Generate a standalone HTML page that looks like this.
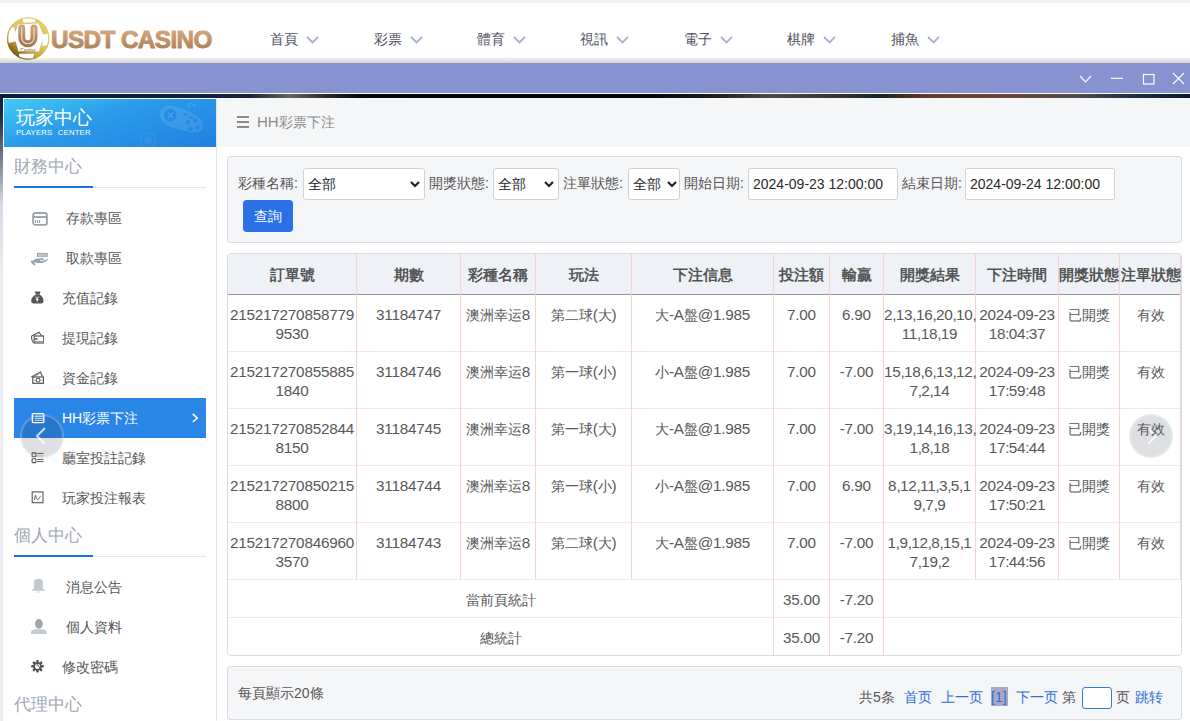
<!DOCTYPE html>
<html><head><meta charset="utf-8">
<style>
*{box-sizing:border-box;margin:0;padding:0}
html,body{width:1190px;height:721px;overflow:hidden;background:#fff;font-family:"Liberation Sans",sans-serif;color:#555}
.abs{position:absolute}
#topstrip{left:0;top:0;width:1190px;height:3px;background:#f3f3f3}
#hdr{left:0;top:3px;width:1190px;height:60px;background:linear-gradient(#fff 0,#fff 53px,#d0d0cc 60px)}
#logotext{left:51px;top:24px;font-size:24px;font-weight:bold;letter-spacing:-0.4px;line-height:30px;background:linear-gradient(#dcb088,#9e7548);-webkit-background-clip:text;color:transparent;white-space:nowrap}
.nav{top:30px;font-size:14px;line-height:18px;color:#4f4f5f;white-space:nowrap}
.nav svg{position:absolute;top:6px}
#purple{left:0;top:63px;width:1190px;height:30px;background:#8792d0}
#wline{left:0;top:93px;width:1190px;height:1px;background:#fff}
#dark{left:0;top:94px;width:1190px;height:627px;background:linear-gradient(180deg,#0e2240 0,#132a48 20px,#6b7488 60px,#d5d9e2 110px,#eceef3 180px,#eceef3 100%)}
#darkstrip{left:0;top:94px;width:1190px;height:4px;background:linear-gradient(90deg,#0c1e3a 0,#10203a 200px,#1a2236 250px,#66665e 290px,#2a2a2a 325px,#05080f 360px,#03060f 650px,#202020 720px,#4a4a48 770px,#2e2e2e 850px,#0e2626 880px,#3a2a20 900px,#6a3a28 930px,#6a4636 1010px,#4a4a4c 1080px,#1c2a44 1140px,#0a1830 1190px)}
#side{left:3px;top:98px;width:214px;height:623px;background:#fff;border:1px solid #fff;border-right:1px solid #e1e5ea}
#sidehead{left:4px;top:99px;width:212px;height:48px;background:linear-gradient(162deg,#43c9f5 0%,#36b3f0 22%,#2b9cea 40%,#2690e7 65%,#1f80e0 100%);overflow:hidden}
#main{left:217px;top:98px;width:973px;height:623px;background:#fff}
#crumb{left:217px;top:98px;width:973px;height:49px;background:#f5f6f8}
.panel{background:#f5f6f8;border:1px solid #d9dde3;border-radius:3px}
.lbl{font-size:14px;color:#555;line-height:18px;white-space:nowrap}
.sel{background:#fff;border:1px solid #cfd3d8;border-radius:3px;height:32px;font-size:14px;color:#212529;line-height:31px;padding-left:4px}
.sel svg{position:absolute;right:4px;top:12px}
.inp{background:#fff;border:1px solid #d0d3d8;border-radius:2px;height:32px;font-size:14px;color:#2a2a2a;line-height:31px;padding-left:4px;white-space:nowrap}
.sec{font-size:17px;color:#9ea7b3;line-height:20px}
.secl{height:1px;background:#e3e6ea}
.secb{height:2px;background:#1a73e3}
.mi{font-size:14px;color:#555;line-height:18px;white-space:nowrap;z-index:2}
.ico{z-index:2}
.th{top:265px;font-size:15px;font-weight:bold;line-height:20px;color:#555;text-align:center;white-space:nowrap;overflow:visible;z-index:2}
.td{font-size:15.3px;letter-spacing:-0.25px;line-height:19px;color:#585858;text-align:center;white-space:nowrap;z-index:2}
.td .cj{font-size:14.2px;line-height:1;letter-spacing:0}
.td .p{letter-spacing:-0.7px}
.th .cj{font-size:14.6px;line-height:1}
</style></head><body>
<div class="abs" id="topstrip"></div>
<div class="abs" id="hdr"></div>
<!-- logo ball -->
<svg class="abs" style="left:4px;top:14px" width="48" height="50" viewBox="0 0 48 50">
<defs><linearGradient id="gold" x1="0.85" y1="0.1" x2="0.2" y2="0.95"><stop offset="0" stop-color="#e4cc68"/><stop offset=".45" stop-color="#dcc468"/><stop offset=".7" stop-color="#c4a440"/><stop offset="1" stop-color="#6a500e"/></linearGradient>
<linearGradient id="ug" x1="0" y1="0" x2="0" y2="1"><stop offset="0" stop-color="#cea07a"/><stop offset="1" stop-color="#a4784e"/></linearGradient>
<linearGradient id="lg" x1="0" y1="0" x2="0" y2="1"><stop offset="0" stop-color="#dcae84"/><stop offset="1" stop-color="#a47850"/></linearGradient>
<clipPath id="cc"><circle cx="24.2" cy="24.5" r="21"/></clipPath></defs>
<circle cx="24.2" cy="24.5" r="21" fill="url(#gold)"/>
<g clip-path="url(#cc)" fill="#fff">
<path d="M14 10.5 L34.5 9.5 L39.5 21.5 L35 37.5 L14.5 37.5 L10 22Z"/>
<path d="M18 3 L32 3 L31 8.3 L19.5 8.8Z"/>
<path d="M2 14.5 L10.3 13 L12.8 27 L3 29.5Z"/>
<path d="M15 39.8 L30 39.8 L28.5 48 L16 48Z"/>
<path d="M38 20.5 L47 19 L47 31 L38.5 32Z"/>
<path d="M6 8 L13 5 L14 7 L8 10Z" opacity=".7"/>
</g>
<circle cx="24.2" cy="24.5" r="20.6" fill="none" stroke="url(#gold)" stroke-width="1.2"/>
<path d="M22.2 13.9 L22.2 23.65 A6.15 6.15 0 0 0 34.5 23.65 L34.5 13.9" fill="none" stroke="url(#ug)" stroke-width="7" stroke-linecap="round" transform="translate(-4.5 0)"/>
<path d="M22.2 13.9 L22.2 23.65 A6.15 6.15 0 0 0 34.5 23.65 L34.5 13.9" fill="none" stroke="#f7eee6" stroke-width="1.1" stroke-linecap="round" opacity=".85" transform="translate(-4.5 0)"/>
<text x="24" y="38.3" font-size="4.6" font-weight="bold" fill="#b48a66" text-anchor="middle" font-family="Liberation Sans">Casino</text>
</svg>
<svg class="abs" style="left:48px;top:24px" width="170" height="30" viewBox="0 0 170 30"><text x="3" y="24.3" font-size="24.3" font-weight="bold" letter-spacing="-0.6" fill="url(#lg)" stroke="url(#lg)" stroke-width="0.9" font-family="Liberation Sans">USDT CASINO</text></svg>
<!-- nav -->
<div class="abs nav" style="left:270px">首頁<svg style="left:36px" width="13" height="8" viewBox="0 0 13 8"><path d="M1 1 L6.5 6.5 L12 1" fill="none" stroke="#a9b3cf" stroke-width="1.8"/></svg></div>
<div class="abs nav" style="left:374px">彩票<svg style="left:36px" width="13" height="8" viewBox="0 0 13 8"><path d="M1 1 L6.5 6.5 L12 1" fill="none" stroke="#a9b3cf" stroke-width="1.8"/></svg></div>
<div class="abs nav" style="left:477px">體育<svg style="left:36px" width="13" height="8" viewBox="0 0 13 8"><path d="M1 1 L6.5 6.5 L12 1" fill="none" stroke="#a9b3cf" stroke-width="1.8"/></svg></div>
<div class="abs nav" style="left:580px">視訊<svg style="left:36px" width="13" height="8" viewBox="0 0 13 8"><path d="M1 1 L6.5 6.5 L12 1" fill="none" stroke="#a9b3cf" stroke-width="1.8"/></svg></div>
<div class="abs nav" style="left:684px">電子<svg style="left:36px" width="13" height="8" viewBox="0 0 13 8"><path d="M1 1 L6.5 6.5 L12 1" fill="none" stroke="#a9b3cf" stroke-width="1.8"/></svg></div>
<div class="abs nav" style="left:787px">棋牌<svg style="left:36px" width="13" height="8" viewBox="0 0 13 8"><path d="M1 1 L6.5 6.5 L12 1" fill="none" stroke="#a9b3cf" stroke-width="1.8"/></svg></div>
<div class="abs nav" style="left:891px">捕魚<svg style="left:36px" width="13" height="8" viewBox="0 0 13 8"><path d="M1 1 L6.5 6.5 L12 1" fill="none" stroke="#a9b3cf" stroke-width="1.8"/></svg></div>

<div class="abs" id="purple"></div>
<svg class="abs" style="left:1070px;top:62px" width="120" height="34" viewBox="0 0 120 34">
<g fill="none" stroke="#fff" stroke-width="1.2">
<path d="M10 14 L15.5 19.8 L21 14"/>
<path d="M40.8 16.3 L53 16.3"/>
<rect x="73.5" y="12.5" width="10.5" height="9.5"/>
<path d="M103 11 L114 22 M114 11 L103 22"/>
</g></svg>
<div class="abs" id="wline"></div>
<div class="abs" id="dark"></div>
<div class="abs" id="darkstrip"></div>

<!-- sidebar -->
<div class="abs" id="side"></div>
<div class="abs" id="sidehead">
 <svg class="abs" style="left:0;top:0" width="212" height="48" viewBox="0 0 212 48">
  <path d="M155.5 14.5 Q157 6 167 6.5 Q180 8 194 18 Q202 24 198 31 Q193 35.5 184 32.5 L171 29.5 Q157 26 155.5 14.5Z" fill="#fff" opacity=".1"/>
  <circle cx="166.4" cy="16.3" r="6.2" fill="#1c78dc" opacity=".55"/>
  <path d="M163.6 13.5 L169.2 19.1 M169.2 13.5 L163.6 19.1" stroke="#5ab4f0" stroke-width="1.6" opacity=".5"/>
  <g fill="#1c78dc" opacity=".5"><circle cx="184" cy="23" r="2.1"/><circle cx="191.5" cy="21.5" r="2.1"/><circle cx="186.5" cy="30" r="2.1"/><circle cx="193.5" cy="28.5" r="2.1"/></g>
  <path d="M180 14.3 L183.5 16.3 M185.3 17.5 L189 19.5" stroke="#1c78dc" stroke-width="1.6" opacity=".5"/>
  <path d="M185 9 Q183.5 4.5 186.5 4.5 Q189 5 190 7 Q191.5 8.5 191 5" fill="none" stroke="#7cc8f5" stroke-width="1" opacity=".35"/>
  <circle cx="144" cy="41.5" r="7.5" fill="none" stroke="#fff" stroke-width="2" stroke-dasharray="3 2" opacity=".07"/>
  <circle cx="144" cy="41.5" r="4" fill="#fff" opacity=".06"/>
 </svg>
 <div class="abs" style="left:12px;top:7px;font-size:19px;line-height:24px;color:#fff;white-space:nowrap">玩家中心</div>
 <div class="abs" style="left:12px;top:29px;font-size:7.8px;line-height:10px;color:#fff;letter-spacing:0.15px;word-spacing:3px;white-space:nowrap">PLAYERS CENTER</div>
</div>

<div class="abs sec" style="left:14px;top:157px">財務中心</div>
<div class="abs secl" style="left:14px;top:187px;width:192px"></div>
<div class="abs secb" style="left:14px;top:186px;width:79px"></div>

<!-- menu icons -->
<svg class="abs ico" style="left:32px;top:212px" width="16" height="14" viewBox="0 0 16 14"><rect x="1.1" y="1" width="13.8" height="11.8" rx="2" fill="none" stroke="#98a3ad" stroke-width="1.8"/><rect x="1" y="4.1" width="14" height="1.9" fill="#98a3ad"/><path d="M3.5 8v3M5.5 8v3M7.5 8v3" stroke="#98a3ad" stroke-width="1"/></svg>
<div class="abs mi" style="left:66px;top:209px">存款專區</div>
<svg class="abs ico" style="left:31px;top:252px" width="18" height="14" viewBox="0 0 18 14"><rect x="6" y="0.9" width="10.8" height="3.9" fill="#9ba5ae"/><rect x="7" y="1.9" width="8.8" height="1.9" fill="#c0c7cd"/><path d="M0.9 9.5 L3.3 12.4" stroke="#98a3ad" stroke-width="2" stroke-linecap="round"/><path d="M2.2 8 Q5 6.3 9 6.3 L12.6 6.3 Q13.3 7.7 12 7.9 L8.8 8 Q8.5 8.9 10.5 8.9 Q14 8.9 17.7 6.3 Q15.5 10.3 11 10.9 L6 10.9 Q3.5 10.6 2.2 9.9Z" fill="#98a3ad"/></svg>
<div class="abs mi" style="left:66px;top:249px">取款專區</div>
<svg class="abs ico" style="left:31px;top:291px" width="13" height="13" viewBox="0 0 13 13"><path d="M3.7 0.6 L9.5 0.6 L8.5 3.5 L5 3.5Z" fill="#555"/><path d="M5 3.5 Q0 6 0.2 10 Q0.2 12.5 2.5 12.5 L10 12.5 Q12.5 12.5 12.5 10 Q12.5 6 8.5 3.5Z" fill="#555"/><path d="M4.7 5.6 L6.2 7.6 L7.7 5.6 M6.2 7.6 V10.6 M4.9 8.4 H7.5" stroke="#fff" stroke-width="1" fill="none"/></svg>
<div class="abs mi" style="left:62px;top:289px">充值記錄</div>
<svg class="abs ico" style="left:31px;top:331px" width="13" height="13" viewBox="0 0 13 13"><path d="M0.3 5.3 L8.1 1.3 L10.6 5" fill="none" stroke="#555" stroke-width="1.1"/><path d="M0.3 5.3 Q0.5 9 2.5 12" fill="none" stroke="#555" stroke-width="1.1"/><rect x="3.2" y="5" width="9.5" height="7" fill="none" stroke="#555" stroke-width="1.2"/><rect x="4.2" y="7" width="2.2" height="2" fill="#666"/><rect x="3.5" y="10" width="9" height="1.6" fill="#999"/></svg>
<div class="abs mi" style="left:62px;top:329px">提現記錄</div>
<svg class="abs ico" style="left:31px;top:371px" width="13" height="13" viewBox="0 0 13 13"><path d="M0.3 6 L9.5 1 L11.5 5.5" fill="none" stroke="#555" stroke-width="1.1"/><path d="M3 5.5 L8.5 2.8" fill="none" stroke="#888" stroke-width="0.9"/><rect x="1.8" y="6" width="10.6" height="6.3" fill="none" stroke="#555" stroke-width="1.2"/><ellipse cx="7.1" cy="9.15" rx="1.9" ry="1.9" fill="none" stroke="#555" stroke-width="1.1"/><path d="M3.6 9.15h1M9.6 9.15h1" stroke="#555" stroke-width="1"/></svg>
<div class="abs mi" style="left:62px;top:369px">資金記錄</div>

<div class="abs" style="left:14px;top:398px;width:192px;height:40px;background:#2a86e6"></div>
<svg class="abs ico" style="left:31px;top:412px" width="14" height="12" viewBox="0 0 14 12"><rect x="1.3" y="1.6" width="11.5" height="9.1" rx="1.2" fill="none" stroke="#fff" stroke-width="1.3"/><path d="M4 4.3H12M4 6.3H12M4 8.3H12" stroke="#e6eef8" stroke-width="0.9"/><path d="M2.4 4.3H3.2M2.4 6.3H3.2M2.4 8.3H3.2" stroke="#cfe0f5" stroke-width="0.9"/></svg>
<div class="abs mi" style="left:62px;top:409px;color:#fff">HH彩票下注</div>
<svg class="abs ico" style="left:190px;top:412px" width="10" height="12" viewBox="0 0 10 12"><path d="M3.3 2.4 L7.3 6.2 L3.3 9.5" fill="none" stroke="#fff" stroke-width="1.6" stroke-linecap="round" stroke-linejoin="round"/></svg>

<svg class="abs ico" style="left:31px;top:452px" width="13" height="12" viewBox="0 0 13 12"><rect x="1.1" y="0.9" width="3.8" height="3.8" rx=".5" fill="none" stroke="#555" stroke-width="1.1"/><rect x="1.1" y="6.8" width="3.8" height="3.8" rx=".5" fill="none" stroke="#555" stroke-width="1.1"/><path d="M6.2 1.4H12.6M6.2 7.4H12.6M6.2 9.6H12.6" stroke="#555" stroke-width="1"/><path d="M6.2 4H12.6" stroke="#aaa" stroke-width="1"/></svg>
<div class="abs mi" style="left:62px;top:449px">廳室投註記錄</div>
<svg class="abs ico" style="left:31px;top:491px" width="13" height="13" viewBox="0 0 13 13"><rect x="1.2" y="0.9" width="10.8" height="10.8" fill="none" stroke="#555" stroke-width="1.1"/><path d="M3.4 9.2 L4.5 4 L5.5 7.6 L7 8.7 L9.5 5.3" fill="none" stroke="#666" stroke-width="1"/></svg>
<div class="abs mi" style="left:62px;top:489px">玩家投注報表</div>

<div class="abs sec" style="left:14px;top:526px">個人中心</div>
<div class="abs secl" style="left:14px;top:556px;width:192px"></div>
<div class="abs secb" style="left:14px;top:555px;width:79px"></div>

<svg class="abs ico" style="left:31px;top:579px" width="16" height="15" viewBox="0 0 16 15"><path d="M3 9.5 L3 3 Q3 0 6.5 0 L8.3 0 Q11.8 0 11.8 3 L11.8 9.5 L15 11.7 L0 11.7Z" fill="#c4c9d1"/><rect x="6.4" y="12.6" width="2.2" height="1" fill="#c4c9d1"/></svg>
<div class="abs mi" style="left:66px;top:578px">消息公告</div>
<svg class="abs ico" style="left:31px;top:619px" width="16" height="16" viewBox="0 0 16 16"><ellipse cx="7.9" cy="4.9" rx="3.9" ry="4.9" fill="#9ea7b0"/><path d="M0 15 L0 13 Q1 10.5 5 10.3 L10.8 10.3 Q14.8 10.5 15.8 13 L15.8 15Z" fill="#c5cad2"/></svg>
<div class="abs mi" style="left:66px;top:618px">個人資料</div>
<svg class="abs ico" style="left:31px;top:660px" width="14" height="14" viewBox="0 0 14 14"><g fill="#505050"><circle cx="6.5" cy="6.3" r="4.3"/><g id="tooth"><rect x="5.3" y="0" width="2.4" height="3" rx=".6"/></g><use href="#tooth" transform="rotate(45 6.5 6.3)"/><use href="#tooth" transform="rotate(90 6.5 6.3)"/><use href="#tooth" transform="rotate(135 6.5 6.3)"/><use href="#tooth" transform="rotate(180 6.5 6.3)"/><use href="#tooth" transform="rotate(225 6.5 6.3)"/><use href="#tooth" transform="rotate(270 6.5 6.3)"/><use href="#tooth" transform="rotate(315 6.5 6.3)"/></g><circle cx="6.5" cy="6.3" r="2.6" fill="#fff"/><path d="M5.3 4.8 Q7.5 4.5 7.8 6.6 L9.3 8.3" fill="none" stroke="#505050" stroke-width="1"/></svg>
<div class="abs mi" style="left:62px;top:658px">修改密碼</div>

<div class="abs sec" style="left:14px;top:695px">代理中心</div>

<!-- main -->
<div class="abs" id="main"></div>
<div class="abs" id="crumb"></div>
<svg class="abs" style="left:237px;top:115px" width="13" height="14" viewBox="0 0 13 14"><path d="M0 2H12M0 7H12M0 12H12" stroke="#8a8a8a" stroke-width="2"/></svg>
<div class="abs" style="left:257px;top:113px;font-size:15px;line-height:18px;color:#8a8a8a;white-space:nowrap">HH<span style="font-size:14px">彩票下注</span></div>

<!-- filter panel -->
<div class="abs panel" style="left:227px;top:156px;width:955px;height:87px"></div>
<div class="abs lbl" style="left:238px;top:174px">彩種名稱:</div>
<div class="abs sel" style="left:303px;top:168px;width:122px">全部<svg width="10" height="7" viewBox="0 0 10 7"><path d="M1 1 L5 5 L9 1" fill="none" stroke="#222" stroke-width="2.2"/></svg></div>
<div class="abs lbl" style="left:429px;top:174px">開獎狀態:</div>
<div class="abs sel" style="left:493px;top:168px;width:66px">全部<svg width="10" height="7" viewBox="0 0 10 7"><path d="M1 1 L5 5 L9 1" fill="none" stroke="#222" stroke-width="2.2"/></svg></div>
<div class="abs lbl" style="left:563px;top:174px">注單狀態:</div>
<div class="abs sel" style="left:628px;top:168px;width:52px">全部<svg style="right:2px" width="10" height="7" viewBox="0 0 10 7"><path d="M1 1 L5 5 L9 1" fill="none" stroke="#222" stroke-width="2.2"/></svg></div>
<div class="abs lbl" style="left:684px;top:174px">開始日期:</div>
<div class="abs inp" style="left:748px;top:168px;width:150px">2024-09-23 12:00:00</div>
<div class="abs lbl" style="left:902px;top:174px">結束日期:</div>
<div class="abs inp" style="left:965px;top:168px;width:150px">2024-09-24 12:00:00</div>
<div class="abs" style="left:243px;top:200px;width:50px;height:32px;background:#2b70e6;border-radius:4px;color:#fff;font-size:14px;line-height:33px;text-align:center">查詢</div>

<!-- table panel -->
<div class="abs" style="left:227px;top:253px;width:955px;height:403px;border:1px solid #d9dde3;border-radius:4px;background:#fff"></div>
<div class="abs" style="left:228px;top:254px;width:953px;height:40px;background:#eef2f6;border-radius:3px 3px 0 0"></div>
<div class="abs" style="left:228px;top:294px;width:953px;height:1px;background:#9b8f8f"></div>
<div class="abs" style="left:228px;top:351px;width:953px;height:1px;background:#ebebeb"></div>
<div class="abs" style="left:228px;top:408px;width:953px;height:1px;background:#ebebeb"></div>
<div class="abs" style="left:228px;top:465px;width:953px;height:1px;background:#ebebeb"></div>
<div class="abs" style="left:228px;top:522px;width:953px;height:1px;background:#ebebeb"></div>
<div class="abs" style="left:228px;top:579px;width:953px;height:1px;background:#ebebeb"></div>
<div class="abs" style="left:228px;top:617px;width:953px;height:1px;background:#ebebeb"></div>
<div class="abs" style="left:356px;top:254px;width:1px;height:325px;background:#f3d3d3"></div>
<div class="abs" style="left:460px;top:254px;width:1px;height:325px;background:#f3d3d3"></div>
<div class="abs" style="left:535px;top:254px;width:1px;height:325px;background:#f3d3d3"></div>
<div class="abs" style="left:631px;top:254px;width:1px;height:325px;background:#f3d3d3"></div>
<div class="abs" style="left:773px;top:254px;width:1px;height:401px;background:#f3d3d3"></div>
<div class="abs" style="left:829px;top:254px;width:1px;height:401px;background:#f3d3d3"></div>
<div class="abs" style="left:883px;top:254px;width:1px;height:401px;background:#f3d3d3"></div>
<div class="abs" style="left:975px;top:254px;width:1px;height:325px;background:#f3d3d3"></div>
<div class="abs" style="left:1058px;top:254px;width:1px;height:325px;background:#f3d3d3"></div>
<div class="abs" style="left:1119px;top:254px;width:1px;height:325px;background:#f3d3d3"></div>
<div class="abs" style="left:1180px;top:254px;width:1px;height:325px;background:#f3d3d3"></div>
<div class="abs th" style="left:228px;width:128px"><span class="cj">訂單號</span></div>
<div class="abs th" style="left:357px;width:103px"><span class="cj">期數</span></div>
<div class="abs th" style="left:461px;width:74px"><span class="cj">彩種名稱</span></div>
<div class="abs th" style="left:536px;width:95px"><span class="cj">玩法</span></div>
<div class="abs th" style="left:632px;width:141px"><span class="cj">下注信息</span></div>
<div class="abs th" style="left:774px;width:55px"><span class="cj">投注額</span></div>
<div class="abs th" style="left:830px;width:53px"><span class="cj">輸贏</span></div>
<div class="abs th" style="left:884px;width:91px"><span class="cj">開獎結果</span></div>
<div class="abs th" style="left:976px;width:82px"><span class="cj">下注時間</span></div>
<div class="abs th" style="left:1059px;width:60px"><span class="cj">開獎狀態</span></div>
<div class="abs th" style="left:1120px;width:61px"><span class="cj">注單狀態</span></div>
<div class="abs td" style="left:228px;top:305px;width:128px">215217270858779<br>9530</div>
<div class="abs td" style="left:357px;top:305px;width:103px">31184747</div>
<div class="abs td" style="left:461px;top:305px;width:74px"><span class="cj">澳洲幸运</span>8</div>
<div class="abs td" style="left:536px;top:305px;width:95px"><span class="cj">第二球</span>(<span class="cj">大</span>)</div>
<div class="abs td" style="left:632px;top:305px;width:141px"><span class="cj">大</span>-A<span class="cj">盤</span>@1.985</div>
<div class="abs td" style="left:774px;top:305px;width:55px">7.00</div>
<div class="abs td" style="left:830px;top:305px;width:53px">6.90</div>
<div class="abs td" style="left:884px;top:305px;width:91px">2<span class="p">,</span>13<span class="p">,</span>16<span class="p">,</span>20<span class="p">,</span>10<span class="p">,</span><br>11<span class="p">,</span>18<span class="p">,</span>19</div>
<div class="abs td" style="left:976px;top:305px;width:82px">2024-09-23<br>18<span class="p">:</span>04<span class="p">:</span>37</div>
<div class="abs td" style="left:1059px;top:305px;width:60px"><span class="cj">已開獎</span></div>
<div class="abs td" style="left:1120px;top:305px;width:61px"><span class="cj">有效</span></div>
<div class="abs td" style="left:228px;top:362px;width:128px">215217270855885<br>1840</div>
<div class="abs td" style="left:357px;top:362px;width:103px">31184746</div>
<div class="abs td" style="left:461px;top:362px;width:74px"><span class="cj">澳洲幸运</span>8</div>
<div class="abs td" style="left:536px;top:362px;width:95px"><span class="cj">第一球</span>(<span class="cj">小</span>)</div>
<div class="abs td" style="left:632px;top:362px;width:141px"><span class="cj">小</span>-A<span class="cj">盤</span>@1.985</div>
<div class="abs td" style="left:774px;top:362px;width:55px">7.00</div>
<div class="abs td" style="left:830px;top:362px;width:53px">-7.00</div>
<div class="abs td" style="left:884px;top:362px;width:91px">15<span class="p">,</span>18<span class="p">,</span>6<span class="p">,</span>13<span class="p">,</span>12<span class="p">,</span><br>7<span class="p">,</span>2<span class="p">,</span>14</div>
<div class="abs td" style="left:976px;top:362px;width:82px">2024-09-23<br>17<span class="p">:</span>59<span class="p">:</span>48</div>
<div class="abs td" style="left:1059px;top:362px;width:60px"><span class="cj">已開獎</span></div>
<div class="abs td" style="left:1120px;top:362px;width:61px"><span class="cj">有效</span></div>
<div class="abs td" style="left:228px;top:419px;width:128px">215217270852844<br>8150</div>
<div class="abs td" style="left:357px;top:419px;width:103px">31184745</div>
<div class="abs td" style="left:461px;top:419px;width:74px"><span class="cj">澳洲幸运</span>8</div>
<div class="abs td" style="left:536px;top:419px;width:95px"><span class="cj">第一球</span>(<span class="cj">大</span>)</div>
<div class="abs td" style="left:632px;top:419px;width:141px"><span class="cj">大</span>-A<span class="cj">盤</span>@1.985</div>
<div class="abs td" style="left:774px;top:419px;width:55px">7.00</div>
<div class="abs td" style="left:830px;top:419px;width:53px">-7.00</div>
<div class="abs td" style="left:884px;top:419px;width:91px">3<span class="p">,</span>19<span class="p">,</span>14<span class="p">,</span>16<span class="p">,</span>13<span class="p">,</span><br>1<span class="p">,</span>8<span class="p">,</span>18</div>
<div class="abs td" style="left:976px;top:419px;width:82px">2024-09-23<br>17<span class="p">:</span>54<span class="p">:</span>44</div>
<div class="abs td" style="left:1059px;top:419px;width:60px"><span class="cj">已開獎</span></div>
<div class="abs td" style="left:1120px;top:419px;width:61px"><span class="cj">有效</span></div>
<div class="abs td" style="left:228px;top:476px;width:128px">215217270850215<br>8800</div>
<div class="abs td" style="left:357px;top:476px;width:103px">31184744</div>
<div class="abs td" style="left:461px;top:476px;width:74px"><span class="cj">澳洲幸运</span>8</div>
<div class="abs td" style="left:536px;top:476px;width:95px"><span class="cj">第一球</span>(<span class="cj">小</span>)</div>
<div class="abs td" style="left:632px;top:476px;width:141px"><span class="cj">小</span>-A<span class="cj">盤</span>@1.985</div>
<div class="abs td" style="left:774px;top:476px;width:55px">7.00</div>
<div class="abs td" style="left:830px;top:476px;width:53px">6.90</div>
<div class="abs td" style="left:884px;top:476px;width:91px">8<span class="p">,</span>12<span class="p">,</span>11<span class="p">,</span>3<span class="p">,</span>5<span class="p">,</span>1<br>9<span class="p">,</span>7<span class="p">,</span>9</div>
<div class="abs td" style="left:976px;top:476px;width:82px">2024-09-23<br>17<span class="p">:</span>50<span class="p">:</span>21</div>
<div class="abs td" style="left:1059px;top:476px;width:60px"><span class="cj">已開獎</span></div>
<div class="abs td" style="left:1120px;top:476px;width:61px"><span class="cj">有效</span></div>
<div class="abs td" style="left:228px;top:533px;width:128px">215217270846960<br>3570</div>
<div class="abs td" style="left:357px;top:533px;width:103px">31184743</div>
<div class="abs td" style="left:461px;top:533px;width:74px"><span class="cj">澳洲幸运</span>8</div>
<div class="abs td" style="left:536px;top:533px;width:95px"><span class="cj">第二球</span>(<span class="cj">大</span>)</div>
<div class="abs td" style="left:632px;top:533px;width:141px"><span class="cj">大</span>-A<span class="cj">盤</span>@1.985</div>
<div class="abs td" style="left:774px;top:533px;width:55px">7.00</div>
<div class="abs td" style="left:830px;top:533px;width:53px">-7.00</div>
<div class="abs td" style="left:884px;top:533px;width:91px">1<span class="p">,</span>9<span class="p">,</span>12<span class="p">,</span>8<span class="p">,</span>15<span class="p">,</span>1<br>7<span class="p">,</span>19<span class="p">,</span>2</div>
<div class="abs td" style="left:976px;top:533px;width:82px">2024-09-23<br>17<span class="p">:</span>44<span class="p">:</span>56</div>
<div class="abs td" style="left:1059px;top:533px;width:60px"><span class="cj">已開獎</span></div>
<div class="abs td" style="left:1120px;top:533px;width:61px"><span class="cj">有效</span></div>
<div class="abs td" style="left:228px;top:590px;width:545px"><span class="cj">當前頁統計</span></div>
<div class="abs td" style="left:774px;top:590px;width:55px">35.00</div>
<div class="abs td" style="left:830px;top:590px;width:53px">-7.20</div>
<div class="abs td" style="left:228px;top:628px;width:545px"><span class="cj">總統計</span></div>
<div class="abs td" style="left:774px;top:628px;width:55px">35.00</div>
<div class="abs td" style="left:830px;top:628px;width:53px">-7.20</div>
<!-- pagination -->
<div class="abs panel" style="left:227px;top:666px;width:955px;height:54px"></div>
<div class="abs lbl" style="left:238px;top:684px">每頁顯示20條</div>
<div class="abs lbl" style="left:859px;top:688px">共5条</div>
<div class="abs lbl" style="left:904px;top:688px;color:#2f6fd8">首页</div>
<div class="abs lbl" style="left:941px;top:688px;color:#2f6fd8">上一页</div>
<div class="abs" style="left:991px;top:687px;width:17px;height:19px;background:#a9a9c2"></div>
<div class="abs lbl" style="left:991px;top:688px;color:#2f6fd8">[1]</div>
<div class="abs lbl" style="left:1016px;top:688px;color:#2f6fd8">下一页</div>
<div class="abs lbl" style="left:1062px;top:688px">第</div>
<div class="abs" style="left:1082px;top:687px;width:30px;height:22px;border:1px solid #3a78e0;border-radius:3px;background:#fff"></div>
<div class="abs lbl" style="left:1116px;top:688px">页</div>
<div class="abs lbl" style="left:1135px;top:688px;color:#2f6fd8">跳转</div>

<!-- carousel circles -->
<div class="abs" style="left:20px;top:414px;width:44px;height:44px;border-radius:50%;background:rgba(30,40,60,0.15);border:2px solid rgba(255,255,255,0.25);z-index:1"></div>
<svg class="abs" style="left:20px;top:414px;z-index:1" width="44" height="44" viewBox="0 0 44 44"><path d="M25 14 L17 22 L25 30" fill="none" stroke="rgba(255,255,255,.75)" stroke-width="2"/></svg>
<div class="abs" style="left:1129px;top:414px;width:44px;height:44px;border-radius:50%;background:rgba(30,40,60,0.15);border:2px solid rgba(255,255,255,0.25);z-index:1"></div>
<svg class="abs" style="left:1129px;top:414px;z-index:1" width="44" height="44" viewBox="0 0 44 44"><path d="M19 14 L27 22 L19 30" fill="none" stroke="rgba(255,255,255,.75)" stroke-width="2"/></svg>
</body></html>
